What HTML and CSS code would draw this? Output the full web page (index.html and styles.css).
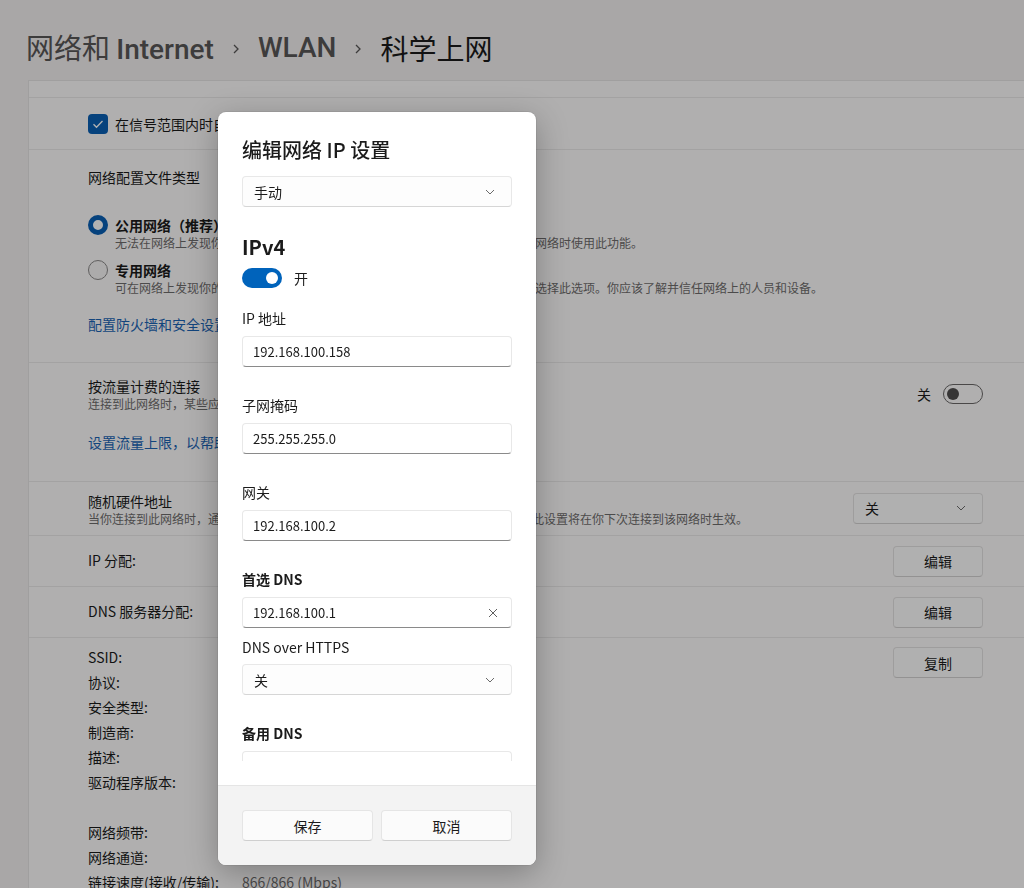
FILE: index.html
```html
<!DOCTYPE html>
<html lang="zh">

<head>
    <meta http-equiv="Content-Type" content="text/html; charset=utf-8">
    <title>科学上网 - WLAN</title>
    <link rel="stylesheet" href="styles.css">
</head>

<body>
    <div class="page">
        <div class="crumbs">
            <span>网络和 <b class="latin">Internet</b></span>
            <svg class="crumb-sep" width="8" height="12" viewBox="0 0 8 12"><path d="M2 2l4 4-4 4" fill="none" stroke="currentColor" stroke-width="1.3"/></svg>
            <span class="latin">WLAN</span>
            <svg class="crumb-sep" width="8" height="12" viewBox="0 0 8 12"><path d="M2 2l4 4-4 4" fill="none" stroke="currentColor" stroke-width="1.3"/></svg>
            <span class="current">科学上网</span>
        </div>

        <div class="card">
            <div class="row row-top"></div>

            <div class="row row-check">
                <span class="checkbox">
                    <svg width="20" height="20" viewBox="0 0 20 20"><path d="M5.5 10.2l3 3 6-6.2" fill="none" stroke="#fff" stroke-width="1.3"/></svg>
                </span>
                <span>在信号范围内时自动连接</span>
            </div>

            <div class="row row-profile">
                <div class="row-title">网络配置文件类型</div>
                <div class="radio-item first">
                    <span class="radio on"></span>
                    <div>
                        <div class="radio-title">公用网络（推荐）</div>
                        <div class="desc">无法在网络上发现你的设备。在大多数情况下，在家、办公室或公共场所连接到网络时使用此功能。</div>
                    </div>
                </div>
                <div class="radio-item">
                    <span class="radio"></span>
                    <div>
                        <div class="radio-title">专用网络</div>
                        <div class="desc">可在网络上发现你的设备。如果需要文件共享或使用通过此网络通信的应用，请选择此选项。你应该了解并信任网络上的人员和设备。</div>
                    </div>
                </div>
                <a class="link link-fw" href="#">配置防火墙和安全设置</a>
            </div>

            <div class="row row-metered">
                <div class="row-main">
                    <div>
                        <div class="row-title">按流量计费的连接</div>
                        <div class="desc">连接到此网络时，某些应用的工作方式可能会有所不同，以减少数据使用量</div>
                    </div>
                    <div class="toggle-wrap">
                        <span>关</span>
                        <span class="switch-off"></span>
                    </div>
                </div>
                <a class="link link-limit" href="#">设置流量上限，以帮助控制此网络上的数据使用量</a>
            </div>

            <div class="row row-line row-mac">
                <div>
                    <div class="row-title">随机硬件地址</div>
                    <div class="desc">当你连接到此网络时，通过使用随机硬件地址，可以使他人更难跟踪你的设备位置。此设置将在你下次连接到该网络时生效。</div>
                </div>
                <div class="select bg-select">
                    <span>关</span>
                    <svg width="10" height="6" viewBox="0 0 10 6"><path d="M1 1l4 4 4-4" fill="none" stroke="currentColor" stroke-width="1"/></svg>
                </div>
            </div>

            <div class="row row-line row-small">
                <span>IP 分配:</span>
                <span class="bg-btn">编辑</span>
            </div>

            <div class="row row-line row-small">
                <span>DNS 服务器分配:</span>
                <span class="bg-btn">编辑</span>
            </div>

            <div class="row row-props">
                <div class="props">
                    <span>SSID:</span><span class="val">科学上网</span>
                    <span>协议:</span><span class="val">Wi-Fi 5 (802.11ac)</span>
                    <span>安全类型:</span><span class="val">WPA2-个人</span>
                    <span>制造商:</span><span class="val">Intel Corporation</span>
                    <span>描述:</span><span class="val">Intel(R) Wi-Fi 6 AX201 160MHz</span>
                    <span>驱动程序版本:</span><span class="val">22.150.0.3</span>
                    <span></span><span></span>
                    <span>网络频带:</span><span class="val">5 GHz</span>
                    <span>网络通道:</span><span class="val">149</span>
                    <span>链接速度(接收/传输):</span><span class="val">866/866 (Mbps)</span>
                </div>
                <span class="bg-btn btn-copy">复制</span>
            </div>
        </div>
    </div>

    <!-- 遮罩层 + 弹窗 -->
    <div class="backdrop"></div>

    <div class="dialog">
        <div class="dialog-body">
            <div class="dialog-scroll">
                <div class="dialog-title">编辑网络 IP 设置</div>
                <div class="select dlg-select">
                    <span>手动</span>
                    <svg width="10" height="6" viewBox="0 0 10 6"><path d="M1 1l4 4 4-4" fill="none" stroke="currentColor" stroke-width="1"/></svg>
                </div>

                <div class="ipv4">IPv4</div>
                <div class="switch-row">
                    <span class="switch-on"></span>
                    <span>开</span>
                </div>

                <div class="field first">
                    <div class="field-label">IP 地址</div>
                    <div class="input">192.168.100.158</div>
                </div>
                <div class="field">
                    <div class="field-label">子网掩码</div>
                    <div class="input">255.255.255.0</div>
                </div>
                <div class="field">
                    <div class="field-label">网关</div>
                    <div class="input">192.168.100.2</div>
                </div>
                <div class="field">
                    <div class="field-label strong">首选 DNS</div>
                    <div class="input">
                        <span>192.168.100.1</span>
                        <svg width="10" height="10" viewBox="0 0 10 10"><path d="M1 1l8 8M9 1l-8 8" fill="none" stroke="#5f5f5f" stroke-width="1"/></svg>
                    </div>
                </div>
                <div class="field-label sub">DNS over HTTPS</div>
                <div class="select dlg-select sub-select">
                    <span>关</span>
                    <svg width="10" height="6" viewBox="0 0 10 6"><path d="M1 1l4 4 4-4" fill="none" stroke="currentColor" stroke-width="1"/></svg>
                </div>
                <div class="field">
                    <div class="field-label strong">备用 DNS</div>
                    <div class="input"></div>
                </div>
            </div>
        </div>
        <div class="dialog-foot">
            <span class="dlg-btn">保存</span>
            <span class="dlg-btn">取消</span>
        </div>
    </div>
</body>

</html>
```

FILE: styles.css
```css
* {
    box-sizing: border-box;
}

body {
    margin: 0;
    width: 1024px;
    height: 888px;
    overflow: hidden;
    background: #f2efef;
    font-family: "Noto Sans CJK SC", "Noto Sans", sans-serif;
    font-size: 14px;
    color: #1b1b1b;
}

.page {
    height: 888px;
    overflow: hidden;
}

/* 顶部面包屑 */
.crumbs {
    height: 80px;
    padding: 16px 0 0 26px;
    display: flex;
    align-items: center;
    gap: 18px;
    font-size: 28px;
    line-height: 36px;
    color: #585656;
}

.crumbs .latin {
    font-family: Roboto, "Noto Sans", sans-serif;
    font-weight: 500;
}

.crumbs .current {
    color: #1b1b1b;
}

.crumb-sep {
    color: #585656;
    margin-top: 2px;
}

/* 背景设置卡片 */
.card {
    margin-left: 28px;
    width: 1010px;
    background: #fcfbfb;
    border: 1px solid #e6e4e4;
    border-right: none;
}

.row {
    border-bottom: 1px solid #eae8e8;
    padding: 0 55px 0 59px;
}

.row-top {
    height: 17px;
}

.row-check {
    height: 52px;
    display: flex;
    align-items: center;
    gap: 7px;
}

.checkbox {
    width: 20px;
    height: 20px;
    border-radius: 4px;
    background: #0a5fb4;
    display: block;
}

.checkbox svg {
    display: block;
}

.row-title {
    line-height: 20px;
}

.desc {
    font-size: 12px;
    line-height: 16px;
    color: #6e6c6c;
    white-space: nowrap;
}

.row-profile {
    height: 213px;
    padding-top: 17px;
}

.radio-item {
    display: flex;
    gap: 7px;
    margin-top: 9px;
}

.radio-item.first {
    margin-top: 28px;
}

.radio {
    width: 20px;
    height: 20px;
    border-radius: 50%;
    border: 1px solid #8a8888;
    background: #f6f5f5;
    flex: none;
}

.radio.on {
    border: 5px solid #0a5fb4;
    background: #fff;
}

.radio-title {
    font-weight: 600;
    line-height: 20px;
}

.link {
    display: block;
    color: #1a64b4;
    text-decoration: none;
    line-height: 20px;
}

.link-fw {
    margin-top: 18px;
}

.row-metered {
    height: 119px;
    padding-top: 13px;
}

.row-main {
    display: flex;
    align-items: center;
    justify-content: space-between;
}

.link-limit {
    margin-top: 20px;
}

.toggle-wrap {
    display: flex;
    align-items: center;
    gap: 12px;
    margin-top: -1px;
}

.switch-off {
    width: 40px;
    height: 20px;
    border-radius: 10px;
    border: 1px solid #6a6868;
    position: relative;
}

.switch-off::after {
    content: "";
    position: absolute;
    left: 3px;
    top: 3px;
    width: 12px;
    height: 12px;
    border-radius: 50%;
    background: #4e4c4c;
}

.row-line {
    display: flex;
    align-items: center;
    justify-content: space-between;
}

.row-mac {
    height: 54px;
}

.row-small {
    height: 51px;
}

.row-small > span:first-child {
    margin-top: -2px;
}

.select {
    display: flex;
    align-items: center;
    justify-content: space-between;
    height: 31px;
    border-radius: 4px;
    padding: 0 16px 0 11px;
    color: #1b1b1b;
}

.select svg {
    color: #6a6a6a;
}

.bg-select {
    width: 130px;
    background: #fdfdfd;
    border: 1px solid #e3e1e1;
    border-bottom-color: #d3d1d1;
    margin-top: -1px;
}

.bg-btn {
    width: 90px;
    height: 31px;
    display: flex;
    align-items: center;
    justify-content: center;
    background: #fdfdfd;
    border: 1px solid #e3e1e1;
    border-bottom-color: #d3d1d1;
    border-radius: 4px;
}

.row-props {
    display: flex;
    justify-content: space-between;
    align-items: flex-start;
    height: 260px;
    border-bottom: none;
}

.props {
    display: grid;
    grid-template-columns: 154px auto;
    grid-auto-rows: 25px;
    align-items: center;
    padding-top: 6px;
}

.props .val {
    color: #6e6c6c;
}

.btn-copy {
    margin-top: 9px;
}

/* 遮罩 */
.backdrop {
    position: fixed;
    inset: 0;
    background: rgba(0, 0, 0, 0.3);
}

/* 弹窗 */
.dialog {
    position: absolute;
    left: 218px;
    top: 112px;
    width: 318px;
    height: 753px;
    background: #fff;
    border-radius: 8px;
    box-shadow: 0 8px 32px rgba(0, 0, 0, 0.28), 0 0 0 1px rgba(0, 0, 0, 0.06);
    display: flex;
    flex-direction: column;
    overflow: hidden;
}

.dialog-body {
    height: 673px;
    padding: 24px 24px 24px 24px;
}

.dialog-scroll {
    height: 100%;
    overflow: hidden;
}

.dialog-title {
    font-size: 20px;
    font-weight: 500;
    line-height: 28px;
}

.dlg-select {
    margin-top: 12px;
    background: #fdfdfd;
    border: 1px solid #e8e8e8;
    border-bottom-color: #d6d6d6;
}

.ipv4 {
    margin-top: 26px;
    font-size: 20px;
    font-weight: 600;
    line-height: 28px;
}

.switch-row {
    margin-top: 7px;
    display: flex;
    align-items: center;
    gap: 12px;
    line-height: 20px;
}

.switch-on {
    width: 40px;
    height: 20px;
    border-radius: 10px;
    background: #0063bb;
    position: relative;
}

.switch-on::after {
    content: "";
    position: absolute;
    right: 4px;
    top: 4px;
    width: 12px;
    height: 12px;
    border-radius: 50%;
    background: #fff;
}

.field {
    margin-top: 28px;
}

.field.first {
    margin-top: 20px;
}

.field-label {
    line-height: 20px;
}

.field-label.strong {
    font-weight: 600;
}

.field-label.sub {
    margin-top: 9px;
}

.sub-select {
    margin-top: 7px;
}

.input {
    margin-top: 8px;
    height: 31px;
    border: 1px solid #e8e8e8;
    border-bottom-color: #8a8a8a;
    border-radius: 4px;
    background: #fff;
    display: flex;
    align-items: center;
    justify-content: space-between;
    padding: 0 13px 0 10px;
    font-size: 13px;
}

.dialog-foot {
    flex: 1;
    background: #f3f3f3;
    border-top: 1px solid #e5e5e5;
    padding: 24px 24px 0 24px;
    display: flex;
    gap: 8px;
}

.dlg-btn {
    flex: 1;
    height: 31px;
    display: flex;
    align-items: center;
    justify-content: center;
    background: #fbfbfb;
    border: 1px solid #e5e5e5;
    border-bottom-color: #cfcfcf;
    border-radius: 4px;
}
```
